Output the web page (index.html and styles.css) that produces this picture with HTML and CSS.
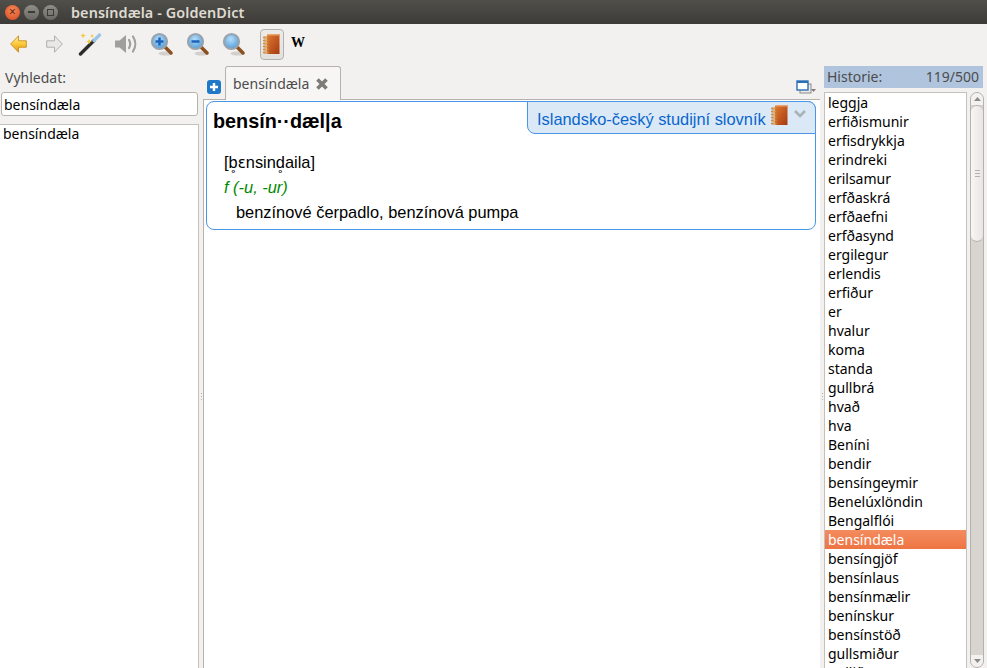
FILE: index.html
```html
<!DOCTYPE html>
<html lang="is">
<head>
<meta charset="utf-8">
<title>bensíndæla - GoldenDict</title>
<link rel="stylesheet" href="styles.css">
</head>
<body>
<svg class="defs" width="0" height="0" aria-hidden="true">
  <defs>
    <linearGradient id="gold" x1="0" y1="0" x2="0" y2="1"><stop offset="0" stop-color="#fff3a8"/><stop offset=".5" stop-color="#fcc838"/><stop offset="1" stop-color="#e69212"/></linearGradient>
    <linearGradient id="bookg" x1="0" y1="0" x2="1" y2="1"><stop offset="0" stop-color="#e27a30"/><stop offset="1" stop-color="#a53a10"/></linearGradient>
    <radialGradient id="lens" cx=".45" cy=".35" r=".75"><stop offset="0" stop-color="#b4def9"/><stop offset="1" stop-color="#4795d4"/></radialGradient>
    <symbol id="book" viewBox="0 0 18 22">
      <path d="M4 2.500C4 1.500 5 1 6 1h10.500v20H6c-1 0-2-.5-2-1.500z" fill="url(#bookg)"/>
      <path d="M5 1h11.500v1.500H5z" fill="#eaa468"/>
      <path d="M1 4.500h4.500M1 7.500h4.500M1 10.500h4.500M1 13.500h4.500M1 16.500h4.500M1 19.500h4.500" stroke="#c97a2c" stroke-width="1.800" stroke-linecap="round" fill="none"/>
      <path d="M1.500 4.200h3M1.500 7.200h3M1.500 10.200h3M1.500 13.200h3M1.500 16.200h3M1.500 19.200h3" stroke="#f7cf96" stroke-width=".7" fill="none"/>
    </symbol>
    <symbol id="loupe" viewBox="0 0 24 24">
      <ellipse cx="15.500" cy="21.500" rx="7" ry="2" fill="#bdbab5" opacity=".6"/>
      <path d="M14 14l7 7" stroke="#8a5020" stroke-width="3.500" stroke-linecap="round"/>
      <circle cx="9.500" cy="9.500" r="7.500" fill="url(#lens)" stroke="#9aa3ab" stroke-width="2.200"/>
    </symbol>
  </defs>
</svg>

<div class="window">
  <header class="titlebar">
    <div class="wm">
      <span class="wm-btn wm-close">×</span>
      <span class="wm-btn wm-min"><i class="glyph-min"></i></span>
      <span class="wm-btn wm-max"><i class="glyph-max"></i></span>
    </div>
    <span class="title">bensíndæla - GoldenDict</span>
  </header>

  <nav class="toolbar">
    <span class="tool">
      <svg width="17" height="18" viewBox="0 0 17 18"><path d="M.7 9L8.500.8v5h7.800v6.400H8.500v5z" fill="url(#gold)" stroke="#cf9426"/></svg>
    </span>
    <span class="tool">
      <svg width="17" height="18" viewBox="0 0 17 18"><path d="M16.300 9L8.500.8v5H.7v6.400h7.800v5z" fill="#e9e8e6" stroke="#b0aeab"/></svg>
    </span>
    <span class="tool">
      <svg width="24" height="24" viewBox="0 0 24 24"><path d="M2.500 22L16 8.500" stroke="#2c2c2c" stroke-width="3.400" stroke-linecap="round"/><path d="M16 8.500l5.500-5.500" stroke="#9cc4e8" stroke-width="3.400" stroke-linecap="round"/><path d="M5 1l1 2 2 .5-2 .8-1 2-.8-2-2-.8 2-.5zM14 2l.8 1.500 1.500.5-1.500.5-.8 1.500-.6-1.500-1.500-.5 1.500-.5zM11 7l1.200 2 2 .6-2 .7-1.200 2-.9-2-2-.7 2-.6z" fill="#f0c838"/></svg>
    </span>
    <span class="tool">
      <svg width="22" height="20" viewBox="0 0 22 20"><path d="M0 6.500h4.500L11 1v18l-6.500-5.500H0z" fill="#9f9f9d"/><path d="M14 6c1.500 2.500 1.500 5.500 0 8M18 2.500c3 4.500 3 10.500 0 15" stroke="#9f9f9d" stroke-width="2.200" fill="none" stroke-linecap="round"/></svg>
    </span>
    <span class="tool">
      <svg width="24" height="24" viewBox="0 0 24 24"><use href="#loupe"/><path d="M5.500 9.500h8M9.500 5.500v8" stroke="#1c62b8" stroke-width="2.500"/></svg>
    </span>
    <span class="tool">
      <svg width="24" height="24" viewBox="0 0 24 24"><use href="#loupe"/><path d="M5.500 9.500h8" stroke="#1c62b8" stroke-width="2.500"/></svg>
    </span>
    <span class="tool">
      <svg width="24" height="24" viewBox="0 0 24 24"><use href="#loupe"/></svg>
    </span>
    <span class="tool-sep"></span>
    <span class="tool-book"><svg width="18" height="22"><use href="#book"/></svg></span>
    <span class="tool-wiki">W</span>
  </nav>

  <main class="panes">
    <section class="search">
      <label class="search-label">Vyhledat:</label>
      <div class="search-input">bensíndæla</div>
      <div class="search-list">bensíndæla</div>
    </section>

    <div class="splitter"><i></i><i></i><i></i></div>

    <section class="center">
      <div class="tabbar">
        <span class="add-tab"><svg width="14" height="14" viewBox="0 0 14 14"><path d="M7 3v8M3 7h8" stroke="#fff" stroke-width="2.400"/></svg></span>
        <div class="tab">
          <span>bensíndæla</span>
          <svg width="14" height="14" viewBox="0 0 14 14"><path d="M2.500 2.500l9 9M11.500 2.500l-9 9" stroke="#7d7b78" stroke-width="3.600"/></svg>
        </div>
        <span class="corner">
          <svg width="20" height="15" viewBox="0 0 20 15"><rect x="4" y="4" width="11" height="9" fill="#eceae8" stroke="#8d8b88"/><rect x="1" y="1" width="11" height="9" fill="#fff" stroke="#2a6fb8" stroke-width="1.400"/><rect x="1" y="1" width="11" height="2" fill="#2a6fb8"/><path d="M15 9h5l-2.500 3z" fill="#7d7b78"/></svg>
        </span>
      </div>
      <div class="view">
        <article class="article">
          <div class="article-head">
            <h1 class="headword">bensín··dæl|a</h1>
            <div class="dict-tag">
              <span class="dict-name">Islandsko-český studijní slovník</span>
              <svg class="dict-book" width="18" height="22"><use href="#book"/></svg>
              <svg class="dict-arrow" width="14" height="10" viewBox="0 0 14 10"><path d="M2 2l5 5 5-5" fill="none" stroke="#a9b1b8" stroke-width="2.600"/></svg>
            </div>
          </div>
          <div class="article-body">
            <p class="phon">[b̥<span class="ipa">ɛ</span>nsind̥aila]</p>
            <p class="gram">f (-u, -ur)</p>
            <p class="trans">benzínové čerpadlo, benzínová pumpa</p>
          </div>
        </article>
      </div>
    </section>

    <div class="splitter"><i></i><i></i><i></i></div>

    <aside class="history">
      <div class="history-head"><span>Historie:</span><span>119/500</span></div>
      <div class="history-body">
        <ul class="history-list">
          <li>leggja</li>
          <li>erfiðismunir</li>
          <li>erfisdrykkja</li>
          <li>erindreki</li>
          <li>erilsamur</li>
          <li>erfðaskrá</li>
          <li>erfðaefni</li>
          <li>erfðasynd</li>
          <li>ergilegur</li>
          <li>erlendis</li>
          <li>erfiður</li>
          <li>er</li>
          <li>hvalur</li>
          <li>koma</li>
          <li>standa</li>
          <li>gullbrá</li>
          <li>hvað</li>
          <li>hva</li>
          <li>Beníni</li>
          <li>bendir</li>
          <li>bensíngeymir</li>
          <li>Benelúxlöndin</li>
          <li>Bengalflói</li>
          <li class="current">bensíndæla</li>
          <li>bensíngjöf</li>
          <li>bensínlaus</li>
          <li>bensínmælir</li>
          <li>benínskur</li>
          <li>bensínstöð</li>
          <li>gullsmiður</li>
          <li>gullið</li>
        </ul>
        <div class="scrollbar">
          <span class="sb-arrow"><svg width="7" height="4" viewBox="0 0 7 4"><path d="M3.500 0L7 4H0z" fill="#8d8b88"/></svg></span>
          <div class="sb-thumb"><i></i><i></i><i></i></div>
          <div class="sb-track"></div>
          <span class="sb-arrow"><svg width="7" height="4" viewBox="0 0 7 4"><path d="M3.500 4L7 0H0z" fill="#8d8b88"/></svg></span>
        </div>
      </div>
    </aside>
  </main>
</div>
</body>
</html>
```

FILE: styles.css
```css
* { box-sizing: border-box; }
html, body { margin: 0; height: 100%; overflow: hidden; }
body { background: #f2f1f0; font-family: "Noto Sans", sans-serif; font-size: 14px; color: #000; }
.defs { display: block; height: 0; }
.window { display: flex; flex-direction: column; height: 668px; }

.titlebar { flex: 0 0 24px; display: flex; align-items: center; background: linear-gradient(#504f4a, #3c3b37); }
.wm { display: flex; gap: 4px; width: 71px; padding-left: 5px; }
.wm-btn { width: 15px; height: 15px; border-radius: 50%; display: flex; align-items: center; justify-content: center; font-size: 12px; line-height: 1; }
.wm-close { background: radial-gradient(circle at 50% 35%, #f58a5c, #d8461c); color: #5a2410; }
.wm-min, .wm-max { background: linear-gradient(#8f8e88, #6a6963); }
.glyph-min { width: 7px; height: 2px; background: #3c3b37; }
.glyph-max { width: 7px; height: 7px; border: 1px solid #3c3b37; }
.title { color: #dfdbd2; font-weight: 600; font-size: 14.400px; letter-spacing: .1px; }

.toolbar { flex: 0 0 40px; display: flex; align-items: center; }
.tool { width: 36px; height: 40px; display: flex; align-items: center; justify-content: center; }
.tool-sep { width: 8px; }
.tool-book { width: 24px; height: 31px; border: 1px solid #b5b2ad; border-radius: 4px; background: linear-gradient(#ecebe8, #e2e0dc); display: flex; align-items: center; justify-content: center; }
.tool-wiki { width: 28px; margin-top: -2px; text-align: center; font-family: "Liberation Serif", serif; font-weight: 700; font-size: 14px; }

.panes { flex: 1; display: flex; min-height: 0; }
.search { width: 199px; flex: none; display: flex; flex-direction: column; }
.search-label { height: 28px; line-height: 28px; padding-left: 5px; color: #4c4c4c; }
.search-input { height: 24px; margin: 0 1px; padding-left: 2px; line-height: 24px; background: #fff; border: 1px solid #b5b2ad; border-radius: 3px; }
.search-list { flex: 1; margin-top: 8px; padding: 0 3px; line-height: 18px; background: #fff; border: 1px solid #c4c1bc; border-bottom: 0; border-left: 0; }

.splitter { width: 4px; flex: none; display: flex; flex-direction: column; align-items: center; justify-content: center; gap: 2px; margin-top: 60px; }
.splitter i { width: 1px; height: 1px; background: #b5b2ad; }

.center { flex: 1; min-width: 0; display: flex; flex-direction: column; }
.tabbar { height: 34px; margin-top: 2px; flex: none; display: flex; align-items: flex-end; padding-left: 4px; border-bottom: 1px solid #b5b2ad; }
.add-tab { width: 14px; height: 14px; margin-bottom: 5px; border-radius: 3px; background: #1f78c8; display: flex; }
.tab { width: 116px; height: 34px; margin: 0 0 -1px 4px; padding: 0 5px 0 7px; display: flex; align-items: center; justify-content: space-between; color: #4c4c4c; background: #f7f6f5; border: 1px solid #b5b2ad; border-bottom: 0; border-radius: 3px 3px 0 0; }
.tab svg { margin-right: 6px; }
.corner { margin-left: auto; margin-right: 4px; margin-bottom: 4px; display: flex; }

.view { flex: 1; min-height: 0; padding: 1px 4px 0 2px; background: #fff; border-left: 1px solid #b5b2ad; font-family: "Liberation Sans", sans-serif; }
.article { height: 129px; border: 1px solid #4a96e6; border-radius: 8px; }
.article-head { height: 32px; display: flex; justify-content: space-between; }
.headword { margin: 0 0 0 6px; font-size: 19.800px; line-height: 38px; font-weight: 700; }
.dict-tag { width: 289px; height: 33px; margin: -1px -1px 0 0; padding: 0 0 0 9px; display: flex; align-items: center; background: #dbe9f7; border: 1px solid #4a96e6; border-radius: 0 8px 0 8px; }
.dict-name { margin-top: 3px; font-size: 16.400px; color: #0a66cc; white-space: nowrap; line-height: 26px; }
.dict-book { margin: -6px 0 0 5px; }
.dict-arrow { margin: -7px 0 0 4px; }
.article-body { padding: 16px 0 0 17px; font-size: 16.400px; line-height: 25px; }
.article-body p { margin: 0; }
.article-body .phon { height: 25px; line-height: 24px; }
.ipa { font-family: "DejaVu Sans", sans-serif; font-size: 15px; }
.gram { color: #008a00; font-style: italic; }
.trans { padding-left: 12px; }

.history { width: 163px; flex: none; display: flex; flex-direction: column; padding-top: 2px; }
.history-head { height: 22px; margin-right: 4px; padding: 0 4px 0 3px; display: flex; justify-content: space-between; line-height: 22px; color: #4c4c4c; background: #b0c4de; }
.history-body { flex: 1; min-height: 0; margin-top: 4px; display: flex; gap: 3px; }
.history-list { width: 143px; margin: 0; padding: 0; list-style: none; overflow: hidden; background: #fff; border: 1px solid #c4c1bc; border-bottom: 0; }
.history-list li { height: 19px; line-height: 19px; padding-left: 3px; white-space: nowrap; }
.history-list .current { color: #fff; background: linear-gradient(#f38c5e, #ee7443); }
.scrollbar { width: 14px; height: 576px; display: flex; flex-direction: column; align-items: center; border: 1px solid #b5b2ad; border-radius: 7px; background: #d8d5d0; overflow: hidden; }
.sb-arrow { width: 100%; height: 12px; flex: none; display: flex; align-items: center; justify-content: center; background: #f2f1f0; }
.sb-thumb { width: 100%; height: 137px; flex: none; display: flex; flex-direction: column; align-items: center; justify-content: center; gap: 2px; background: linear-gradient(90deg, #f7f6f5, #e8e6e3); border: 1px solid #b5b2ad; border-width: 1px 0; border-radius: 7px; }
.sb-thumb i { width: 5px; height: 1px; background: #b5b2ad; }
.sb-track { flex: 1; }
```
